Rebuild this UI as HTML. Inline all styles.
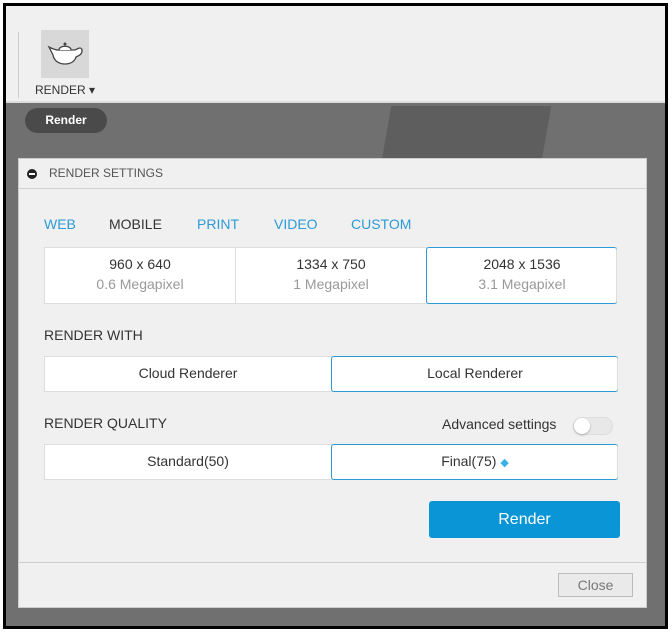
<!DOCTYPE html>
<html><head><style>
*{box-sizing:border-box;margin:0;padding:0}
body{width:672px;height:632px;background:#fff;font-family:"Liberation Sans",sans-serif;position:relative;overflow:hidden}
.frame{position:absolute;left:3px;top:3px;width:665px;height:626px;border:3px solid #000;background:#707070;overflow:hidden}
.tb{position:absolute;left:0;top:0;width:100%;height:97px;background:#f0f0f0;border-bottom:2px solid #ddd}
.vl{position:absolute;left:12px;top:26px;width:1px;height:66px;background:#ccc}
.icon{position:absolute;left:35px;top:24px;width:48px;height:48px;background:#d8d8d8}
.rl{position:absolute;left:29px;top:77px;font-size:12px;color:#333}
.shape1{position:absolute;left:380px;top:100px;width:160px;height:60px;background:#5e5e5e;transform:skewX(-10deg)}
.pill{position:absolute;left:19px;top:102px;width:82px;height:25px;border-radius:13px;background:#4a4a4a;color:#fff;font-weight:bold;font-size:12px;text-align:center;line-height:25px}
.dlg{position:absolute;left:12px;top:152px;width:629px;height:450px;background:#f0f0f0;border:1px solid #ccc}
.hd{height:30px;border-bottom:1px solid #d0d0d0;font-size:12px;color:#555;line-height:28px;padding-left:30px;position:relative}
.hd:before{content:"";position:absolute;left:8px;top:10px;width:10px;height:10px;border-radius:50%;background:#222}
.hd:after{content:"";position:absolute;left:10px;top:14px;width:6px;height:2px;background:#fff}
.tabs{position:absolute;top:57px;left:25px;font-size:14px}
.tabs span{position:absolute;white-space:nowrap;color:#2d9ad8}
.row{position:absolute;left:25px;display:flex;background:#fff;border:1px solid #ddd}
.row div{flex:1;text-align:center;font-size:14px;color:#333;border-right:1px solid #ddd}
.row div:last-child{border-right:none}
.row .sel{border:1px solid #2d9ad8;border-radius:3px;margin:-1px}
.sub{color:#999;font-size:14px}
.lbl{position:absolute;left:25px;font-size:14px;color:#333}
.btn{position:absolute;left:410px;top:342px;width:191px;height:37px;background:#0a96d6;border-radius:3px;color:#fff;font-size:16px;text-align:center;line-height:37px}
.ft{position:absolute;left:0;top:403px;width:100%;border-top:1px solid #ccc}
.close{position:absolute;left:539px;top:414px;width:75px;height:24px;border:1px solid #bbb;background:#eaeaea;color:#777;font-size:14px;text-align:center;line-height:22px}
.tog{position:absolute;left:554px;top:258px;width:40px;height:18px;border-radius:9px;background:#e8e8e8;border:1px solid #ddd}
.tog:before{content:"";position:absolute;left:0;top:0;width:16px;height:16px;border-radius:50%;background:#fff;box-shadow:0 1px 2px #aaa}
</style></head><body>
<div class="frame">
<div class="shape1"></div>
<div class="tb"><div class="vl"></div>
<div class="icon"><svg width="48" height="48" viewBox="0 0 48 48"><path d="M8 17 C12 19 15 20 17 20 L33 20 C35 20 37 18 39 18 C42 18 42 24 37 26 L35 27 C34 31 30 34 24 34 C18 34 13 31 12 25 Z" fill="#fff" stroke="#444" stroke-width="1.3"/><path d="M18 20 C18 15 30 15 30 20" fill="#fff" stroke="#444" stroke-width="1.3"/><circle cx="24" cy="14" r="1.5" fill="#444"/></svg></div>
<div class="rl">RENDER ▾</div></div>
<div class="pill">Render</div>
<div class="dlg">
<div class="hd">RENDER SETTINGS</div>
<div class="tabs"><span style="left:0">WEB</span><span style="left:65px;color:#333">MOBILE</span><span style="left:153px">PRINT</span><span style="left:230px">VIDEO</span><span style="left:307px">CUSTOM</span></div>
<div class="row" style="top:88px;width:573px;height:57px">
<div style="padding-top:8px">960 x 640<br><span class="sub" style="line-height:24px">0.6 Megapixel</span></div>
<div style="padding-top:8px">1334 x 750<br><span class="sub" style="line-height:24px">1 Megapixel</span></div>
<div class="sel" style="padding-top:8px">2048 x 1536<br><span class="sub" style="line-height:24px">3.1 Megapixel</span></div></div>
<div class="lbl" style="top:168px">RENDER WITH</div>
<div class="row" style="top:197px;width:574px;height:36px;line-height:32px">
<div>Cloud Renderer</div><div class="sel">Local Renderer</div></div>
<div class="lbl" style="top:256px">RENDER QUALITY</div>
<div class="lbl" style="left:423px;top:257px">Advanced settings</div>
<div class="tog"></div>
<div class="row" style="top:285px;width:574px;height:36px;line-height:32px">
<div>Standard(50)</div><div class="sel">Final(75) <span style="color:#3ab0e8;font-size:11px">◆</span></div></div>
<div class="btn">Render</div>
<div class="ft"></div>
<div class="close">Close</div>
</div>
</div>
</body></html>
